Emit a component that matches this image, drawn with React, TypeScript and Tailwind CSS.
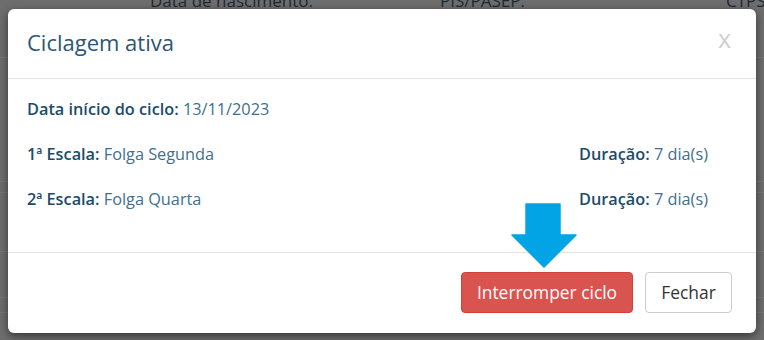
export default function App() {
  const font = { fontFamily: '"Open Sans", "Liberation Sans", sans-serif' };
  return (
    <div className="relative w-[764px] h-[340px] overflow-hidden bg-[#6d6d6d]" style={font}>
      {/* table behind the backdrop */}
      <div className="flex flex-col">
        <div className="h-[58px] border-b border-[#777] relative">
          <span className="absolute top-[-12px] left-[150px] text-[17px] text-[#1c2a36]">Data de nascimento:</span>
          <span className="absolute top-[-12px] left-[440px] text-[17px] text-[#1c2a36]">PIS/PASEP:</span>
          <span className="absolute top-[-12px] left-[726px] text-[17px] text-[#1c2a36]">CTPS</span>
        </div>
        <div className="h-[124px] border-b border-[#767676]" />
        <div className="h-[11px] border-b border-[#767676]" />
        <div className="h-[59px] border-b border-[#767676]" />
        <div className="h-[46px] border-b border-[#767676]" />
        <div className="h-[15px] border-b border-[#767676]" />
      </div>

      <div className="absolute left-[8px] top-[9px] w-[748px] h-[324px] bg-white rounded-[6px] shadow-[0_3px_9px_rgba(0,0,0,0.5)] flex flex-col">
        <div className="h-[70px] border-b border-[#e5e5e5] flex items-center justify-between px-[19px] pb-[2px]">
          <h4 className="text-[22px] text-[#2b5674]">Ciclagem ativa</h4>
          <span className="text-[25px] text-[#cfcfcf] mr-[6px] mt-[-8px]">x</span>
        </div>
        <div className="flex-1 px-[19px] pt-[19px] flex flex-col gap-[23px] text-[16.3px] leading-[22px] text-[#40708d]">
          <div>
            <b className="font-semibold text-[#1d4c6a]">Data início do ciclo:</b> 13/11/2023
          </div>
          <div className="flex">
            <div className="w-[552px]">
              <b className="font-semibold text-[#1d4c6a]">1ª Escala:</b> Folga Segunda
            </div>
            <div>
              <b className="font-semibold text-[#1d4c6a]">Duração:</b> 7 dia(s)
            </div>
          </div>
          <div className="flex">
            <div className="w-[552px]">
              <b className="font-semibold text-[#1d4c6a]">2ª Escala:</b> Folga Quarta
            </div>
            <div>
              <b className="font-semibold text-[#1d4c6a]">Duração:</b> 7 dia(s)
            </div>
          </div>
        </div>
        <div className="h-[81px] border-t border-[#e5e5e5] flex justify-end items-start gap-[12px] pt-[19px] pr-[24px]">
          <button className="h-[41px] w-[172px] rounded-[4px] bg-[#d9534f] border border-[#d43f3a] text-white text-[17.4px]">
            Interromper ciclo
          </button>
          <button className="h-[41px] w-[87px] rounded-[4px] bg-white border border-[#cccccc] text-[#333] text-[17.4px]">
            Fechar
          </button>
        </div>
      </div>

      <svg className="absolute left-[510px] top-[203px]" width="68" height="66" viewBox="0 0 68 66">
        <path d="M16 1 H50 V32 H66 L34 64 L2 32 H16 Z" fill="#03a4e6" stroke="#03a4e6" strokeWidth="1.5" strokeLinejoin="round" />
      </svg>
    </div>
  );
}
